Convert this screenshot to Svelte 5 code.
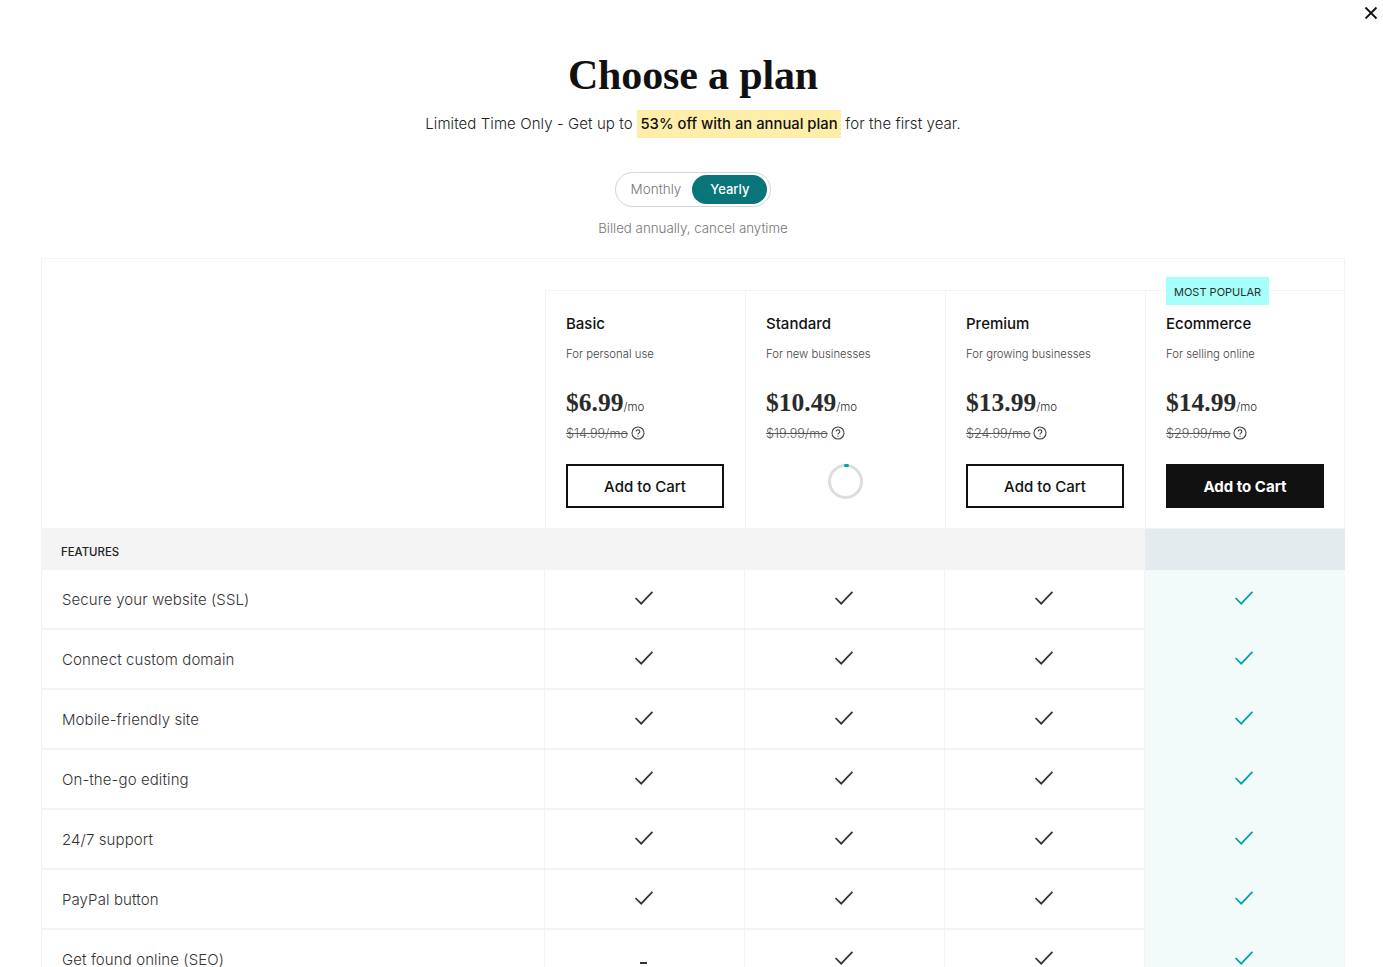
<script>
  const plans = [
    { name: 'Basic', blurb: 'For personal use', price: '$6.99', was: '$14.99/mo' },
    { name: 'Standard', blurb: 'For new businesses', price: '$10.49', was: '$19.99/mo', loading: true },
    { name: 'Premium', blurb: 'For growing businesses', price: '$13.99', was: '$24.99/mo' },
    { name: 'Ecommerce', blurb: 'For selling online', price: '$14.99', was: '$29.99/mo', popular: true }
  ];

  const features = [
    { label: 'Secure your website (SSL)', has: [true, true, true, true] },
    { label: 'Connect custom domain', has: [true, true, true, true] },
    { label: 'Mobile-friendly site', has: [true, true, true, true] },
    { label: 'On-the-go editing', has: [true, true, true, true] },
    { label: '24/7 support', has: [true, true, true, true] },
    { label: 'PayPal button', has: [true, true, true, true] },
    { label: 'Get found online (SEO)', has: [false, true, true, true] }
  ];
</script>

<div class="modal">
  <button class="close" type="button" aria-label="Close">
    <svg width="14" height="14" viewBox="0 0 14 14"><path d="M1.5 1.5l11 11M12.5 1.5l-11 11" /></svg>
  </button>

  <header class="intro">
    <h1>Choose a plan</h1>
    <p class="offer">
      Limited Time Only - Get up to <mark>53% off with an annual plan</mark> for the first year.
    </p>
    <div class="toggle">
      <span class="opt">Monthly</span>
      <span class="opt on">Yearly</span>
    </div>
    <p class="billed">Billed annually, cancel anytime</p>
  </header>

  <div class="table">
    <div class="heads">
      <div class="spacer"></div>
      {#each plans as plan}
        <div class="plan">
          {#if plan.popular}
            <span class="badge">MOST POPULAR</span>
          {/if}
          <h2>{plan.name}</h2>
          <p class="blurb">{plan.blurb}</p>
          <div class="price"><b>{plan.price}</b><span>/mo</span></div>
          <div class="was">
            <s>{plan.was}</s>
            <svg width="14" height="14" viewBox="0 0 14 14">
              <circle cx="7" cy="7" r="6" />
              <path d="M5.2 5.5a1.8 1.8 0 1 1 2.7 1.6c-.6.3-.9.7-.9 1.3" />
              <path d="M7 9.7v1" />
            </svg>
          </div>
          {#if plan.loading}
            <div class="spinner"><i></i></div>
          {:else}
            <button type="button" class="cart" class:solid={plan.popular}>Add to Cart</button>
          {/if}
        </div>
      {/each}
    </div>

    <div class="section">
      <span>FEATURES</span>
      <div class="tint"></div>
    </div>

    {#each features as row}
      <div class="row">
        <div class="label">{row.label}</div>
        {#each row.has as on, i}
          <div class="cell" class:hot={i === 3}>
            {#if on}
              <svg width="20" height="16" viewBox="0 0 20 16"><path d="M1.5 8l5.7 5.7L18.4 1.8" /></svg>
            {:else}
              <span class="dash"></span>
            {/if}
          </div>
        {/each}
      </div>
    {/each}
  </div>
</div>

<style>
  :global(body) {
    background: #fff;
    overflow: hidden;
  }

  .modal {
    position: relative;
    height: 100vh;
    overflow: hidden;
    box-sizing: border-box;
    padding: 0 38px 0 41px;
    font-family: Inter, sans-serif;
    color: #111;
  }

  .close {
    position: absolute;
    top: 6px;
    right: 5px;
    width: 14px;
    height: 14px;
    padding: 0;
    border: none;
    background: none;
  }

  .close svg {
    display: block;
    fill: none;
    stroke: #111;
    stroke-width: 1.8;
  }

  .intro {
    text-align: center;
    padding-top: 50px;
    height: 258px;
    box-sizing: border-box;
  }

  h1 {
    margin: 0;
    font-family: "Liberation Serif", serif;
    font-size: 42px;
    line-height: 50px;
    font-weight: 700;
    letter-spacing: -0.15px;
    color: #111;
  }

  .offer {
    margin: 10px 0 0;
    font-size: 15px;
    line-height: 28px;
    font-weight: 300;
    letter-spacing: 0.08px;
    color: #222;
  }

  mark {
    display: inline-block;
    margin: 0 0.5px;
    padding: 0 3px;
    background: #ffeea9;
    color: #111;
    font-weight: 500;
    font-size: 14.8px;
    letter-spacing: 0;
  }

  .toggle {
    display: inline-flex;
    align-items: center;
    margin-top: 34px;
    padding: 2px 3px 2px 15px;
    gap: 11px;
    border: 1px solid #d6d6d6;
    border-radius: 18px;
    font-size: 13.5px;
  }

  .opt {
    color: #767676;
    line-height: 29px;
    font-weight: 300;
  }

  .opt.on {
    width: 75px;
    border-radius: 15px;
    background: #09757a;
    color: #fff;
    font-size: 13px;
    font-weight: 500;
  }

  .billed {
    margin: 11px 0 0;
    font-size: 13.3px;
    line-height: 20px;
    font-weight: 300;
    color: #767676;
  }

  .table {
    border: 1px solid #f3f3f3;
    border-bottom: none;
    width: 1304px;
    box-sizing: border-box;
    padding-top: 31px;
  }

  .heads {
    display: grid;
    grid-template-columns: 503px repeat(4, 200px);
  }

  .plan {
    position: relative;
    height: 238px;
    box-sizing: border-box;
    padding: 24px 20px 0;
    border-top: 1px solid #f3f3f3;
    border-left: 1px solid #f3f3f3;
  }

  .badge {
    position: absolute;
    top: -14px;
    left: 20px;
    padding: 1px 8px 0;
    height: 27px;
    background: #a6fff8;
    color: #1f2f2f;
    font-size: 11px;
    line-height: 28px;
  }

  h2 {
    margin: 0;
    font-size: 15px;
    line-height: 18px;
    font-weight: 500;
    color: #111;
  }

  .blurb {
    margin: 13px 0 0;
    font-size: 11.3px;
    line-height: 16px;
    font-weight: 300;
    color: #444;
  }

  .price {
    margin-top: 23px;
    line-height: 36px;
    color: #2b2b2b;
  }

  .price b {
    font-family: "Liberation Serif", serif;
    font-size: 25.5px;
  }

  .price span {
    font-size: 11.5px;
    font-weight: 300;
  }

  .was {
    display: flex;
    align-items: center;
    gap: 3px;
    margin-top: -1px;
    height: 18px;
    font-size: 12.6px;
    font-weight: 300;
    color: #555;
  }

  .was svg {
    fill: none;
    stroke: #444;
    stroke-width: 1.1;
  }

  .cart {
    display: block;
    width: 158px;
    height: 44px;
    margin-top: 22px;
    border: 2px solid #111;
    border-radius: 0;
    background: #fff;
    color: #111;
    font: 500 15px Inter, sans-serif;
  }

  .cart.solid {
    background: #111;
    color: #fff;
    font-weight: 700;
  }

  .spinner {
    position: relative;
    box-sizing: border-box;
    width: 35px;
    height: 35px;
    margin: 22px 0 0 62px;
    border: 3.5px solid #ddd;
    border-radius: 50%;
  }

  .spinner i {
    position: absolute;
    top: -3.5px;
    left: 12.5px;
    width: 5px;
    height: 3px;
    border-radius: 2px;
    background: #00a4a6;
  }

  .section {
    display: grid;
    grid-template-columns: 1103px 200px;
    height: 42px;
    background: #f4f4f4;
    border-top: 1px solid #f3f3f3;
    box-sizing: border-box;
  }

  .section span {
    padding: 15px 0 0 19px;
    font-size: 11.4px;
    line-height: 16px;
    font-weight: 500;
    color: #222;
  }

  .tint {
    background: #e3ebee;
  }

  .row {
    display: grid;
    grid-template-columns: 502px repeat(3, 200px) 201px;
    height: 60px;
    box-sizing: border-box;
    border-bottom: 2px solid #f3f3f3;
  }

  .label {
    padding-left: 20px;
    font-size: 15px;
    font-weight: 300;
    line-height: 60px;
    letter-spacing: 0.1px;
    color: #333;
  }

  .cell {
    display: flex;
    align-items: center;
    justify-content: center;
    padding: 0 2px 4px 0;
    border-left: 1px solid #f3f3f3;
  }

  .cell svg {
    fill: none;
    stroke: #333;
    stroke-width: 1.7;
  }

  .cell.hot {
    background: #f2fbfa;
  }

  .cell.hot svg {
    stroke: #00a4a6;
  }

  .dash {
    width: 7px;
    height: 2px;
    margin-top: 10px;
    background: #333;
  }
</style>
